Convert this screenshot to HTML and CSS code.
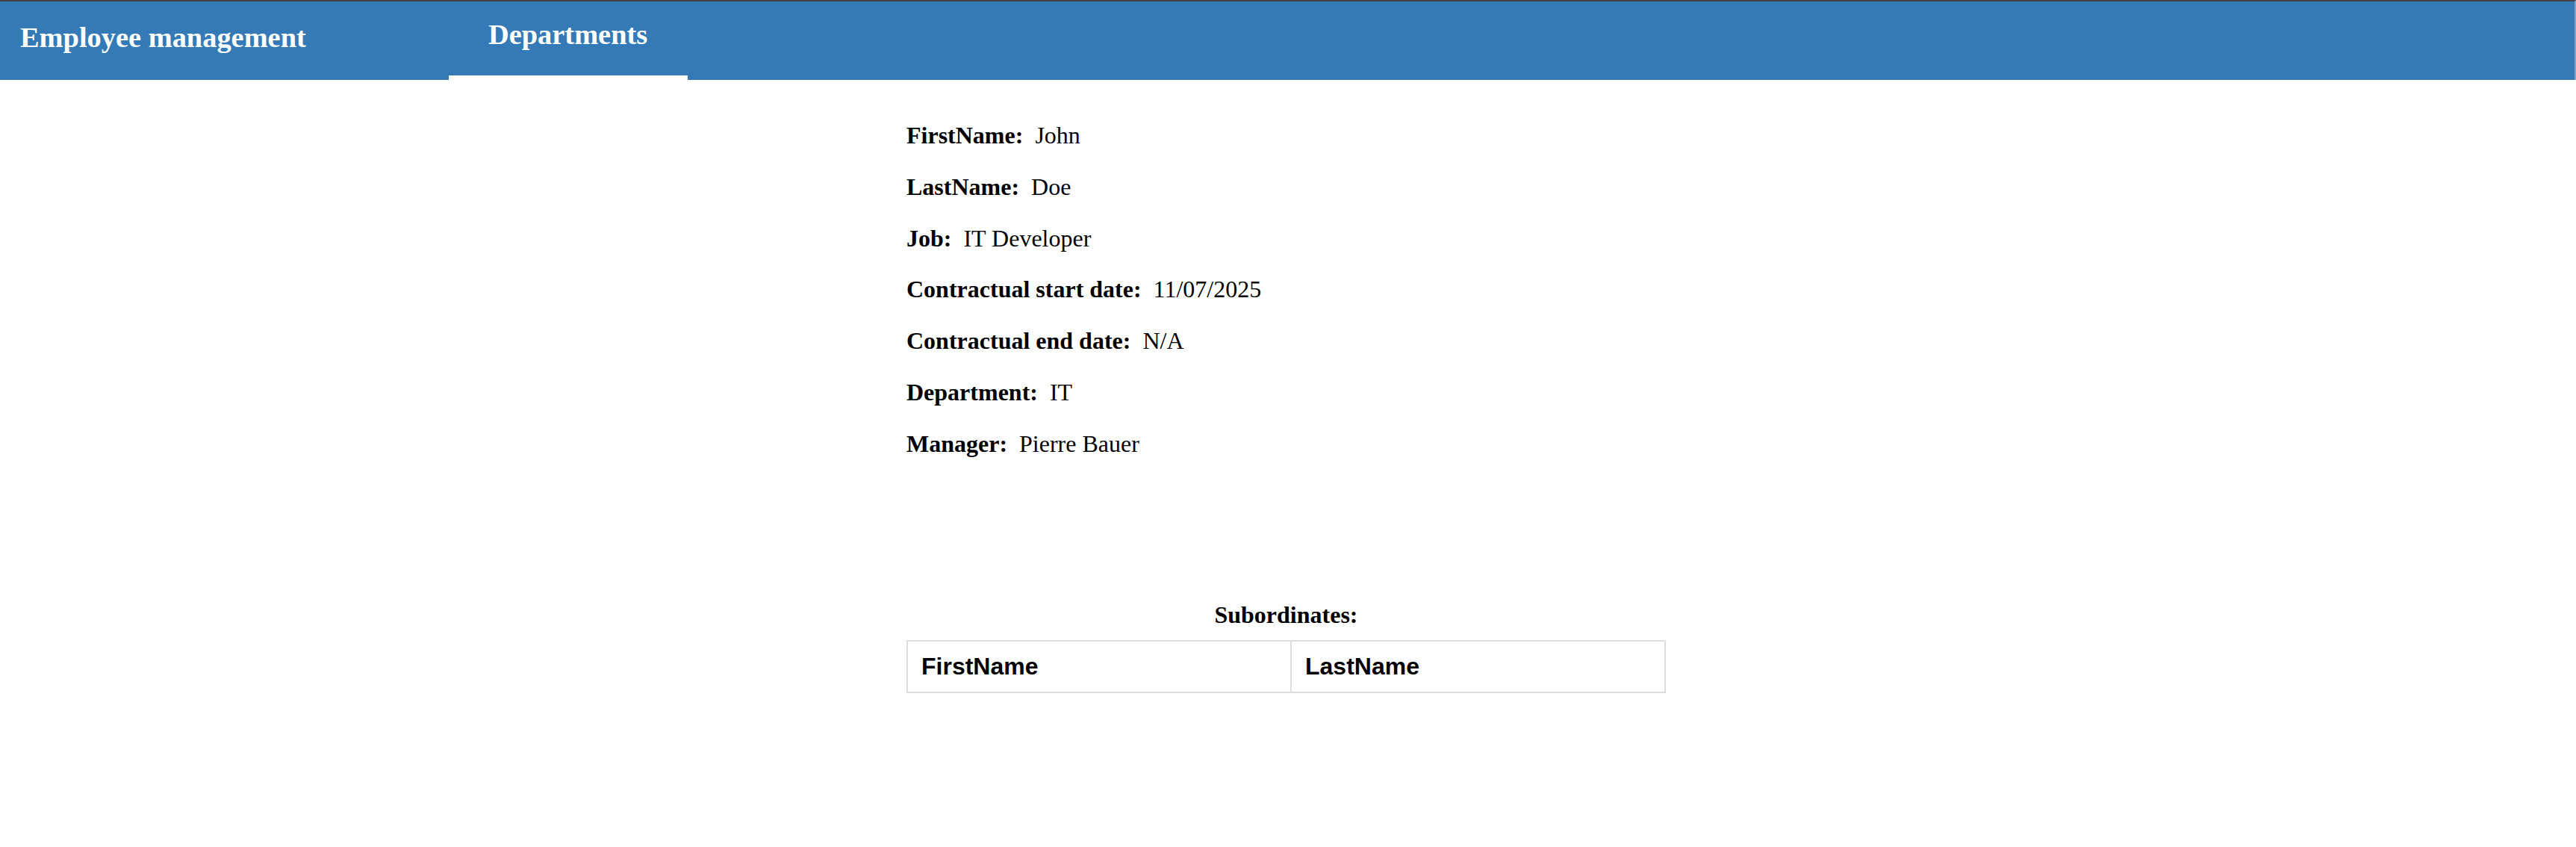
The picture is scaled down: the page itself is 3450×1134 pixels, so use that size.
FILE: index.html
```html
<!DOCTYPE html>
<html lang="en">
<head>
<meta charset="utf-8">
<title>Employee management</title>
<link rel="stylesheet" href="styles.css">
</head>
<body>
<header class="navbar">
  <div class="brand">Employee management</div>
  <a class="tab active" href="#">Departments</a>
</header>
<main class="content">
  <section class="details">
    <p class="row"><strong>FirstName:</strong>&nbsp; John</p>
    <p class="row"><strong>LastName:</strong>&nbsp; Doe</p>
    <p class="row"><strong>Job:</strong>&nbsp; IT Developer</p>
    <p class="row"><strong>Contractual start date:</strong>&nbsp; 11/07/2025</p>
    <p class="row"><strong>Contractual end date:</strong>&nbsp; N/A</p>
    <p class="row"><strong>Department:</strong>&nbsp; IT</p>
    <p class="row"><strong>Manager:</strong>&nbsp; Pierre Bauer</p>
  </section>
  <section class="subordinates">
    <h2 class="sub-title">Subordinates:</h2>
    <table class="sub-table">
      <thead>
        <tr>
          <th class="col-first">FirstName</th>
          <th class="col-last">LastName</th>
        </tr>
      </thead>
      <tbody></tbody>
    </table>
  </section>
</main>
</body>
</html>
```
FILE: styles.css
```css
html, body {
  margin: 0;
  padding: 0;
  background: #ffffff;
}

body {
  font-family: "Liberation Serif", "Times New Roman", serif;
  color: #000000;
}

.navbar {
  display: flex;
  align-items: flex-start;
  height: 105px;
  background: #337ab7;
  border-top: 2px solid #444444;
  border-right: 2px solid #7ba3cb;
}

.brand {
  width: 574px;
  padding: 26px 0 0 27px;
  color: #ffffff;
  font-weight: bold;
  font-size: 38.4px;
  line-height: 1.15;
  white-space: nowrap;
}

.tab {
  box-sizing: border-box;
  height: 105px;
  width: 320px;
  padding: 22px 0 0 53px;
  color: #ffffff;
  font-weight: bold;
  font-size: 38.4px;
  line-height: 1.15;
  text-decoration: none;
  white-space: nowrap;
}

.tab.active {
  border-bottom: 6px solid #ffffff;
}

.content {
  width: 1017px;
  margin: 0 auto;
  padding: 24px 5px 0 0;
}

.details {
  font-size: 32px;
  line-height: 1.15;
}

.row {
  margin: 32px 0;
}

.subordinates {
  margin-top: 192px;
}

.sub-title {
  margin: 0 0 16px;
  font-size: 32px;
  line-height: 1.15;
  font-weight: bold;
  text-align: center;
}

.sub-table {
  width: 1017px;
  border-collapse: separate;
  border-spacing: 0;
  border: 2px solid #dddddd;
  table-layout: fixed;
}

.sub-table th {
  padding: 15px 18px;
  text-align: left;
  font-family: "Liberation Sans", Arial, sans-serif;
  font-weight: bold;
  font-size: 32px;
  line-height: 1.15;
}

.col-first {
  width: 476px;
}

.col-last {
  border-left: 2px solid #dddddd;
}
```
